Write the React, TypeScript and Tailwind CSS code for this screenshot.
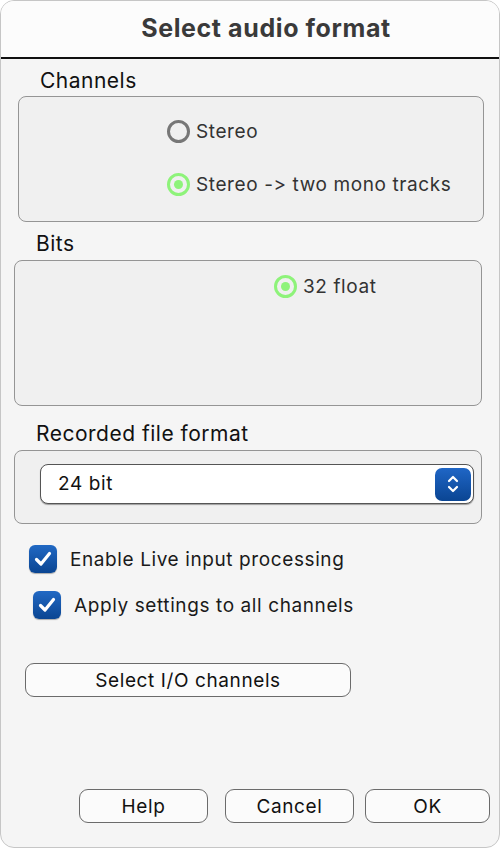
import React, { useState } from "react";

const Radio = ({ on, label }: { on: boolean; label: string }) => (
  <div className="flex items-center gap-[6px]">
    <span
      className={
        on
          ? "w-[23px] h-[23px] rounded-full border-[3px] border-[#8ef37a] flex items-center justify-center"
          : "w-[23px] h-[23px] rounded-full border-[3px] border-[#777777]"
      }
    >
      {on && <span className="w-[9px] h-[9px] rounded-full bg-[#8ef37a]" />}
    </span>
    <span className="text-[19px] text-[#333333] leading-none tracking-[0.6px]">{label}</span>
  </div>
);

const Check = ({ label, checked, onToggle }: { label: string; checked: boolean; onToggle: () => void }) => (
  <div className="flex items-center gap-[13px] cursor-pointer" onClick={onToggle}>
    <span className="w-[28px] h-[28px] rounded-[6px] bg-gradient-to-b from-[#2169c4] to-[#0a4592] flex items-center justify-center shadow-[0_1px_1px_rgba(0,0,0,0.3)]">
      {checked && (
        <svg width="20" height="18" viewBox="0 0 20 18">
          <path d="M3.5 9.5 L8 14 L16.5 3.5" fill="none" stroke="white" strokeWidth="3.2" strokeLinecap="round" strokeLinejoin="round" />
        </svg>
      )}
    </span>
    <span className="text-[19px] text-[#1a1a1a] leading-none tracking-[0.6px]">{label}</span>
  </div>
);

const MacButton = ({ label, w }: { label: string; w: string }) => (
  <button
    className={
      "h-[34px] rounded-[9px] border-[1.5px] border-[#6b6b6b] bg-[#fbfbfb] text-[19px] text-[#111] leading-none tracking-[0.6px] " + w
    }
  >
    {label}
  </button>
);

const App = () => {
  const [live, setlive] = useState(true);
  const [all, setall] = useState(true);

  return (
    <div
      className="w-[500px] h-[848px] rounded-[14px] border border-[#c6c6c6] bg-[#f5f5f5] overflow-hidden flex flex-col [font-feature-settings:'calt'_0]"
      style={{ fontFamily: "Inter, 'Liberation Sans', sans-serif" }}
    >
      {/* title bar */}
      <div className="h-[58px] shrink-0 bg-[#fcfcfc] border-b-2 border-[#111] flex items-center justify-center pl-[32px]">
        <h1 className="text-[25px] font-bold text-[#3a3a3a] tracking-[0.6px]">Select audio format</h1>
      </div>

      {/* Channels */}
      <div className="pl-[39px] mt-[10px] text-[21px] text-[#111] leading-[24px] tracking-[0.5px]">Channels</div>
      <div className="ml-[17px] mr-[15px] mt-[3px] h-[126px] rounded-[8px] border-[1.5px] border-[#959595] bg-[#f0f0f0] pl-[148px] pt-[23px] flex flex-col gap-[30px]">
        <Radio on={false} label="Stereo" />
        <Radio on={true} label="Stereo -> two mono tracks" />
      </div>

      {/* Bits */}
      <div className="pl-[35px] mt-[10px] text-[21px] text-[#111] leading-[24px] tracking-[0.5px]">Bits</div>
      <div className="ml-[13px] mr-[17px] mt-[4px] h-[146px] rounded-[8px] border-[1.5px] border-[#959595] bg-[#f0f0f0] pl-[259px] pt-[14px]">
        <Radio on={true} label="32 float" />
      </div>

      {/* Recorded file format */}
      <div className="pl-[35px] mt-[16px] text-[21px] text-[#111] leading-[24px] tracking-[0.5px]">Recorded file format</div>
      <div className="ml-[13px] mr-[17px] mt-[4px] h-[74px] rounded-[8px] border-[1.5px] border-[#959595] bg-[#f0f0f0] pl-[25px] pr-[7px] pt-[13px]">
        <div className="h-[40px] rounded-[8px] bg-white border border-[#555] shadow-[0_1px_1px_rgba(0,0,0,0.35)] flex items-center justify-between pl-[17px] pr-[2px]">
          <span className="text-[19px] text-[#111] tracking-[0.6px]">24 bit</span>
          <span className="w-[36px] h-[33px] rounded-[7px] bg-gradient-to-b from-[#1f66c6] to-[#0a4593] flex items-center justify-center">
            <svg width="14" height="22" viewBox="0 0 14 22">
              <path d="M3 8 L7 4 L11 8 M3 14 L7 18 L11 14" fill="none" stroke="white" strokeWidth="2.2" strokeLinecap="round" strokeLinejoin="round" />
            </svg>
          </span>
        </div>
      </div>

      {/* checkboxes */}
      <div className="pl-[28px] mt-[21px]">
        <Check label="Enable Live input processing" checked={live} onToggle={() => setlive(!live)} />
      </div>
      <div className="pl-[32px] mt-[18px]">
        <Check label="Apply settings to all channels" checked={all} onToggle={() => setall(!all)} />
      </div>

      <div className="pl-[24px] mt-[44px]">
        <MacButton label="Select I/O channels" w="w-[326px]" />
      </div>

      {/* footer */}
      <div className="mt-auto mb-[24px] flex justify-end gap-[17px] pr-[9px]">
        <MacButton label="Help" w="w-[129px]" />
        <div className="flex gap-[11px]">
          <MacButton label="Cancel" w="w-[129px]" />
          <MacButton label="OK" w="w-[125px]" />
        </div>
      </div>
    </div>
  );
};

export default App;
